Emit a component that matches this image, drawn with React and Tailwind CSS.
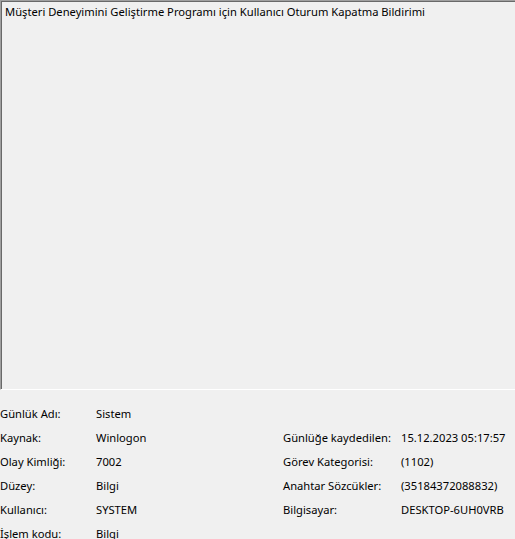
import React from "react";

const rows = [
  ["Günlük Adı:", "Sistem", null, null],
  ["Kaynak:", "Winlogon", "Günlüğe kaydedilen:", "15.12.2023 05:17:57"],
  ["Olay Kimliği:", "7002", "Görev Kategorisi:", "(1102)"],
  ["Düzey:", "Bilgi", "Anahtar Sözcükler:", "(35184372088832)"],
  ["Kullanıcı:", "SYSTEM", "Bilgisayar:", "DESKTOP-6UH0VRB"],
  ["İşlem kodu:", "Bilgi", null, null],
];

export default function App() {
  return (
    <div
      className="w-[515px] h-[539px] overflow-hidden bg-[#f0f0f0] text-[11.2px] text-black"
      style={{ fontFamily: '"Noto Sans", "Open Sans", sans-serif' }}
    >
      {/* description box */}
      <div className="h-[390px] w-[530px] border-t border-l border-t-[#a0a0a0] border-l-[#a0a0a0] border-b border-b-white">
        <div className="h-full border-t border-l border-[#696969] pl-[3px] pt-[1px] leading-[17px]">
          Müşteri Deneyimini Geliştirme Programı için Kullanıcı Oturum Kapatma Bildirimi
        </div>
      </div>

      {/* details */}
      <div className="pt-[12px]">
        {rows.map(([l1, v1, l2, v2]) => (
          <div key={l1} className="flex h-[24px] items-center whitespace-nowrap">
            <span className="w-[96px]">{l1}</span>
            <span className="w-[187px]">{v1}</span>
            {l2 && <span className="w-[118px]">{l2}</span>}
            {v2 && <span>{v2}</span>}
          </div>
        ))}
      </div>
    </div>
  );
}
